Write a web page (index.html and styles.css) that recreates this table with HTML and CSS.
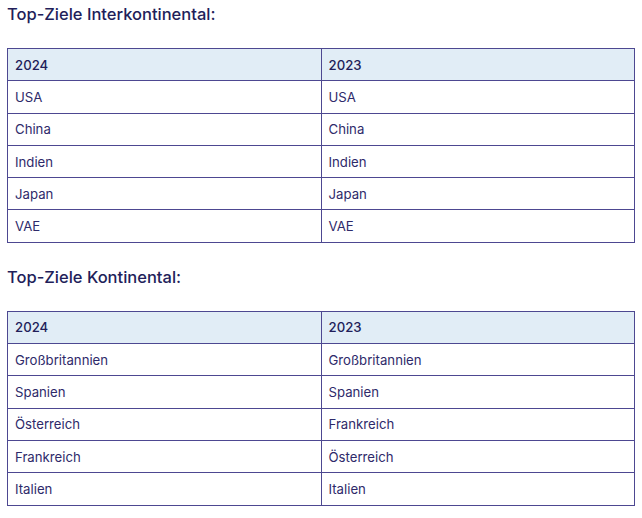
FILE: index.html
```html
<!DOCTYPE html>
<html lang="de">
<head>
<meta charset="utf-8">
<link rel="stylesheet" href="styles.css">
</head>
<body>
<div class="page">
  <h2 class="title">Top-Ziele Interkontinental:</h2>
  <table class="tbl">
    <thead><tr><th>2024</th><th>2023</th></tr></thead>
    <tbody>
      <tr><td>USA</td><td>USA</td></tr>
      <tr><td>China</td><td>China</td></tr>
      <tr><td>Indien</td><td>Indien</td></tr>
      <tr><td>Japan</td><td>Japan</td></tr>
      <tr><td>VAE</td><td>VAE</td></tr>
    </tbody>
  </table>
  <h2 class="title">Top-Ziele Kontinental:</h2>
  <table class="tbl">
    <thead><tr><th>2024</th><th>2023</th></tr></thead>
    <tbody>
      <tr><td>Großbritannien</td><td>Großbritannien</td></tr>
      <tr><td>Spanien</td><td>Spanien</td></tr>
      <tr><td>Österreich</td><td>Frankreich</td></tr>
      <tr><td>Frankreich</td><td>Österreich</td></tr>
      <tr><td>Italien</td><td>Italien</td></tr>
    </tbody>
  </table>
</div>
</body>
</html>
```
FILE: styles.css
```css
html, body {
  margin: 0;
  padding: 0;
  background: #ffffff;
}
.page {
  padding: 0 7px;
  font-family: Inter, "Liberation Sans", sans-serif;
  color: #2b2766;
}
.title {
  margin: 0 0 20px 0;
  font-size: 16.5px;
  line-height: 28px;
  font-weight: 500;
  color: #221e5a;
}
.tbl {
  width: 628px;
  border-collapse: collapse;
  margin-bottom: 20px;
  table-layout: fixed;
}
.tbl th, .tbl td {
  border: 1px solid #4d4891;
  height: 32.3px;
  padding: 0 7px;
  text-align: left;
  vertical-align: middle;
  font-size: 13.2px;
  box-sizing: border-box;
}
.tbl th {
  background: #e1edf6;
  font-weight: 500;
  color: #221e5a;
}
.tbl td {
  font-weight: 400;
  color: #2e2a6a;
}
```
